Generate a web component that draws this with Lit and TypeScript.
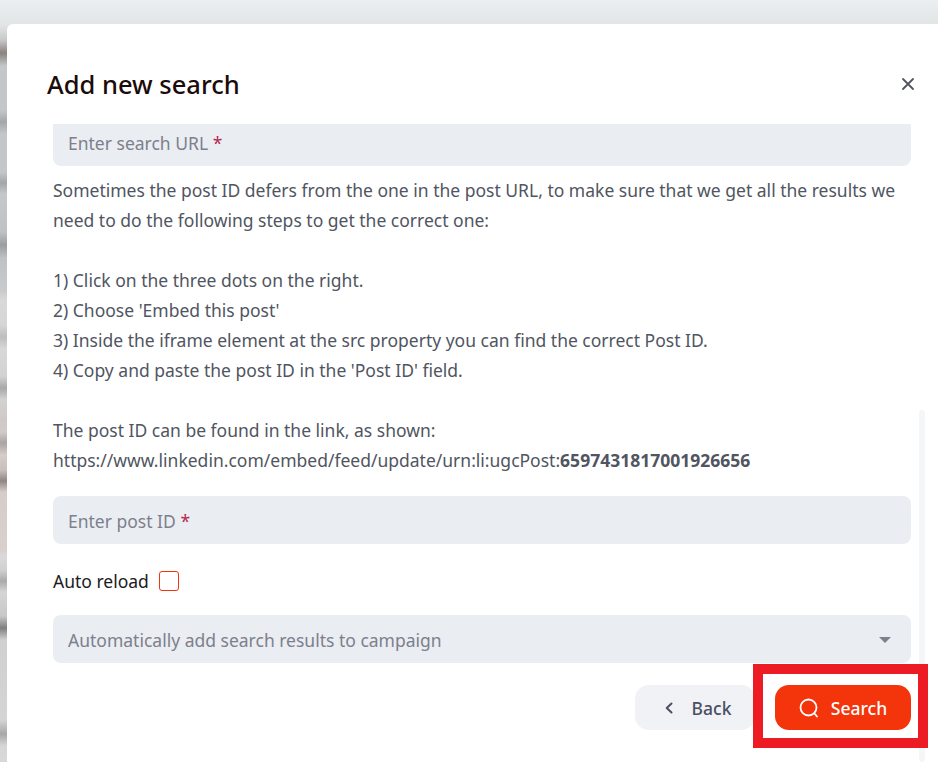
import { LitElement, html, css } from "lit";
import { customElement } from "lit/decorators.js";

@customElement("app-root")
export class AppRoot extends LitElement {
  static styles = css`
    :host {
      display: block;
      width: 938px;
      height: 762px;
      position: relative;
      overflow: hidden;
      font-family: "Noto Sans", sans-serif;
      background:
        linear-gradient(180deg, #eceff1 0, #e2e5e6 24px, transparent 24px),
        linear-gradient(
          180deg,
          #e4e7e9 24px, #c8c8c8 40px, #8a8380 53px, #c4c6c8 66px, #c4c7ca 110px, #a4a7aa 122px, #c4c7ca 134px,
          #c4c7ca 172px, #a3a6a9 183px, #c5c8cb 194px, #bfc2c5 232px, #9a9da0 245px, #bfc2c5 258px,
          #c8cacc 290px, #d8d8d8 300px, #d6d6d6 325px, #bdbdbd 337px, #d8d8d8 349px, #d2d2d2 376px,
          #a8a8a8 388px, #d4d2d2 400px, #d0c8c6 420px, #d2cac8 432px, #aaa4a4 443px, #d6ccca 455px,
          #c8bebc 470px, #8f8583 481px, #d6ccca 492px, #d9cfcc 550px, #dadada 556px, #d0d0d0 570px,
          #a8aaac 581px, #d5d5d5 592px, #c8c8c8 616px, #7f7f7f 628px, #d0d0d0 640px, #d4d4d4 720px,
          #a5a7a9 734px, #d6d6d6 746px, #d8d8d8 762px
        );
      padding: 24px 0 0 7px;
      box-sizing: border-box;
    }
    .modal {
      height: 100%;
      background: #fff;
      border-radius: 6px 0 0 0;
      display: flex;
      flex-direction: column;
    }
    .header {
      height: 100px;
      flex: none;
      box-sizing: border-box;
      padding: 20px 20px 0 40px;
      display: flex;
      align-items: center;
      justify-content: space-between;
    }
    h2 {
      margin: 0;
      font-size: 25.5px;
      font-weight: 500;
      line-height: 32px;
      color: #1c0b0b;
    }
    .close {
      width: 20px;
      height: 20px;
      display: block;
    }
    .body {
      flex: 1;
      overflow: hidden;
      padding: 0 27px 0 46px;
    }
    .inner {
      margin-top: -6px;
      display: flex;
      flex-direction: column;
    }
    .field {
      height: 48px;
      flex: none;
      box-sizing: border-box;
      border-radius: 8px;
      background: #eaedf2;
      display: flex;
      align-items: center;
      justify-content: space-between;
      padding: 2px 20px 0 15px;
      font-size: 17.5px;
      color: #7d808c;
    }
    .field i {
      font-style: normal;
      color: #b5294e;
    }
    .caret {
      width: 0;
      height: 0;
      border-left: 6px solid transparent;
      border-right: 6px solid transparent;
      border-top: 6px solid #7d808c;
    }
    .help {
      margin: 9px 0 21px;
      font-size: 17.5px;
      line-height: 30px;
      color: #505561;
    }
    .help b {
      font-weight: 700;
    }
    .reload {
      display: flex;
      align-items: center;
      gap: 10px;
      height: 20px;
      margin: 27px 0 24px;
      font-size: 17.5px;
      color: #1b1b24;
    }
    .box {
      width: 18px;
      height: 18px;
      border: 1px solid #f4340a;
      border-radius: 3px;
    }
    .actions {
      display: flex;
      justify-content: flex-end;
      gap: 20px;
      margin-top: 22px;
    }
    .btn {
      height: 45px;
      border-radius: 14px;
      display: flex;
      align-items: center;
      justify-content: center;
      font-size: 17.5px;
      font-weight: 500;
      box-sizing: border-box;
    }
    .back {
      width: 120px;
      padding-left: 3px;
      background: #f1f2f6;
      color: #4a4f63;
      gap: 16px;
    }
    .search {
      width: 136px;
      background: #f4340a;
      color: #fff;
      gap: 12px;
    }
    .thumb {
      position: absolute;
      left: 919px;
      top: 410px;
      width: 6px;
      height: 352px;
      border-radius: 3px;
      background: #f5f6f8;
    }
    .annotation {
      position: absolute;
      left: 753px;
      top: 664px;
      width: 175px;
      height: 84px;
      box-sizing: border-box;
      border: 10px solid #ed1c24;
    }
  `;

  render() {
    return html`
      <div class="modal">
        <div class="header">
          <h2>Add new search</h2>
          <svg class="close" viewBox="0 0 20 20" fill="none" stroke="#50545f" stroke-width="1.8" stroke-linecap="round">
            <path d="M5 5l10 10M15 5L5 15" />
          </svg>
        </div>
        <div class="body">
          <div class="inner">
            <div class="field"><span>Enter search URL <i>*</i></span></div>
            <div class="help">
              Sometimes the post ID defers from the one in the post URL, to make sure that we get all the results we<br />
              need to do the following steps to get the correct one:<br /><br />
              1) Click on the three dots on the right.<br />
              2) Choose 'Embed this post'<br />
              3) Inside the iframe element at the src property you can find the correct Post ID.<br />
              4) Copy and paste the post ID in the 'Post ID' field.<br /><br />
              The post ID can be found in the link, as shown:<br />
              https://www.linkedin.com/embed/feed/update/urn:li:ugcPost:<b>6597431817001926656</b>
            </div>
            <div class="field"><span>Enter post ID <i>*</i></span></div>
            <div class="reload"><span>Auto reload</span><span class="box"></span></div>
            <div class="field">
              <span>Automatically add search results to campaign</span><span class="caret"></span>
            </div>
            <div class="actions">
              <div class="btn back">
                <svg width="14" height="14" viewBox="0 0 14 14" fill="none" stroke="#4a4f63" stroke-width="2" stroke-linecap="round" stroke-linejoin="round">
                  <path d="M9.5 2.5L4.75 7L9.5 11.5" />
                </svg>
                <span>Back</span>
              </div>
              <div class="btn search">
                <svg width="20" height="20" viewBox="0 0 20 20" fill="none" stroke="#fff" stroke-width="1.8" stroke-linecap="round">
                  <circle cx="9.5" cy="9.5" r="8" />
                  <path d="M15.5 15.5l2.5 3" />
                </svg>
                <span>Search</span>
              </div>
            </div>
          </div>
        </div>
      </div>
      <div class="thumb"></div>
      <div class="annotation"></div>
    `;
  }
}
